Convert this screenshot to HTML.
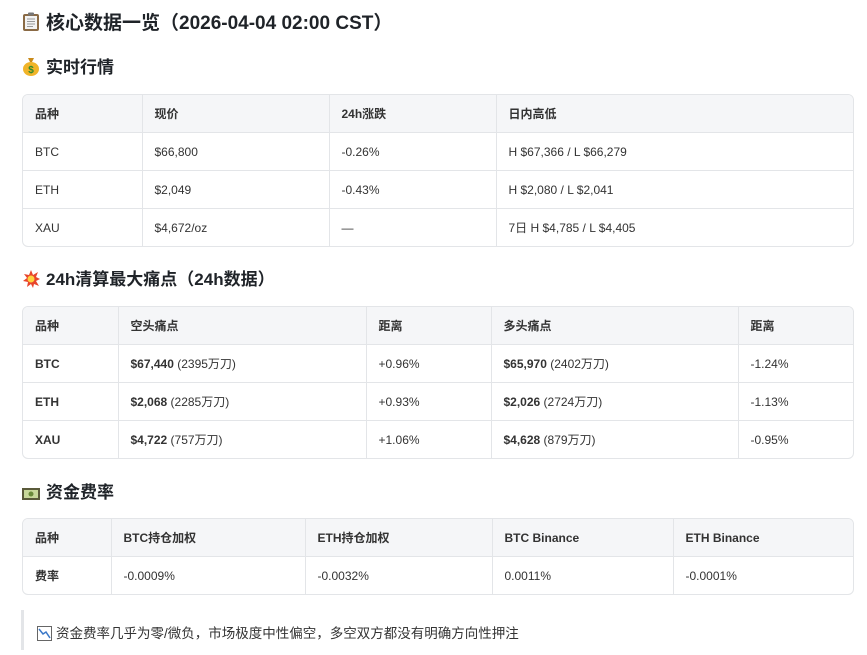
<!DOCTYPE html><html><head><meta charset="utf-8"><style>
body{margin:0;background:#fff;font-family:"Liberation Sans","Noto Sans CJK SC",sans-serif;color:#1f2328;width:867px;height:655px;overflow:hidden;position:relative}
.h{position:absolute;left:22px;font-weight:bold;white-space:nowrap}
.t{position:absolute;left:22px;width:832px;border:1px solid #e3e5e8;border-radius:6px;overflow:hidden;box-sizing:border-box}
table{border-collapse:collapse;width:100%;font-size:12px;table-layout:fixed}
td{height:37px;padding:0 12px;border-right:1px solid #e3e5e8;border-bottom:1px solid #e3e5e8;color:#333;white-space:nowrap}
td:last-child{border-right:none}
tr:last-child td{border-bottom:none}
tr:first-child td{background:#f5f6f8;font-weight:bold;height:37px}
b{font-weight:bold}
.ic{display:inline-block;vertical-align:-3px;margin-right:6px}
</style></head><body>
<div class="h" style="top:8px;font-size:19px">
<svg class="ic" width="18" height="20" viewBox="0 0 18 20"><rect x="1" y="2" width="16" height="17" rx="2" fill="#8a6a45"/><rect x="3" y="4" width="12" height="13" fill="#f3f3f3"/><rect x="6" y="0.5" width="6" height="3" rx="1" fill="#777"/><path d="M5 7h8M5 9.5h8M5 12h8M5 14.5h6" stroke="#999" stroke-width="1"/></svg>核心数据一览（2026-04-04 02:00 CST）</div>
<div class="h" style="top:53px;font-size:17px"><svg class="ic" width="18" height="20" viewBox="0 0 18 20"><path d="M6 2h6l-2 4h-2z" fill="#c98a1a"/><ellipse cx="9" cy="13" rx="8" ry="7" fill="#f0b429"/><text x="9" y="17" font-size="10" text-anchor="middle" fill="#2d8a2d" font-family="Liberation Sans">$</text></svg>实时行情</div>
<div class="t" style="top:94px;height:153px"><table><colgroup><col style="width:119px"><col style="width:187px"><col style="width:167px"><col></colgroup>
<tr><td>品种</td><td>现价</td><td>24h涨跌</td><td>日内高低</td></tr>
<tr><td>BTC</td><td>$66,800</td><td>-0.26%</td><td>H $67,366 / L $66,279</td></tr>
<tr><td>ETH</td><td>$2,049</td><td>-0.43%</td><td>H $2,080 / L $2,041</td></tr>
<tr><td>XAU</td><td>$4,672/oz</td><td>—</td><td>7日 H $4,785 / L $4,405</td></tr></table></div>
<div class="h" style="top:265px;font-size:17px"><svg class="ic" width="18" height="18" viewBox="0 0 18 18"><path d="M9 0l2 5 5-3-2 5 4 2-4 2 3 5-5-2-1 4-2-4-4 3 1-5-5-1 4-3-3-4 5 1z" fill="#e8452c"/><circle cx="9" cy="9" r="3.5" fill="#ffd23f"/></svg>24h清算最大痛点（24h数据）</div>
<div class="t" style="top:306px;height:153px"><table><colgroup><col style="width:95px"><col style="width:248px"><col style="width:125px"><col style="width:247px"><col></colgroup>
<tr><td>品种</td><td>空头痛点</td><td>距离</td><td>多头痛点</td><td>距离</td></tr>
<tr><td><b>BTC</b></td><td><b>$67,440</b> (2395万刀)</td><td>+0.96%</td><td><b>$65,970</b> (2402万刀)</td><td>-1.24%</td></tr>
<tr><td><b>ETH</b></td><td><b>$2,068</b> (2285万刀)</td><td>+0.93%</td><td><b>$2,026</b> (2724万刀)</td><td>-1.13%</td></tr>
<tr><td><b>XAU</b></td><td><b>$4,722</b> (757万刀)</td><td>+1.06%</td><td><b>$4,628</b> (879万刀)</td><td>-0.95%</td></tr></table></div>
<div class="h" style="top:478px;font-size:17px"><svg class="ic" width="18" height="14" viewBox="0 0 18 14"><rect x="0" y="1" width="18" height="12" fill="#5a5a3a"/><rect x="2" y="3" width="14" height="8" fill="#c8d89a"/><circle cx="9" cy="7" r="2.5" fill="#6a8a3a"/></svg>资金费率</div>
<div class="t" style="top:518px;height:77px"><table><colgroup><col style="width:88px"><col style="width:194px"><col style="width:187px"><col style="width:181px"><col></colgroup>
<tr><td>品种</td><td>BTC持仓加权</td><td>ETH持仓加权</td><td>BTC Binance</td><td>ETH Binance</td></tr>
<tr><td><b>费率</b></td><td>-0.0009%</td><td>-0.0032%</td><td>0.0011%</td><td>-0.0001%</td></tr></table></div>
<div style="position:absolute;left:21px;top:610px;width:3px;height:40px;background:#e3e5e8"></div>
<div style="position:absolute;left:37px;top:622px;font-size:13.5px;color:#333;white-space:nowrap"><svg class="ic" style="margin-right:4px" width="15" height="15" viewBox="0 0 15 15"><rect x="0.5" y="0.5" width="14" height="14" fill="#fff" stroke="#666"/><path d="M2 3l4 5 3-2 4 6" stroke="#3a78c8" stroke-width="1.5" fill="none"/></svg>资金费率几乎为零/微负，市场极度中性偏空，多空双方都没有明确方向性押注</div>
</body></html>
